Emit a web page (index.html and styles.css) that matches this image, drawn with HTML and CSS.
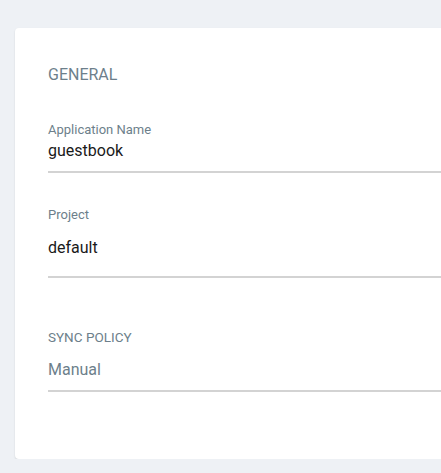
FILE: index.html
```html
<!DOCTYPE html>
<html>
<head>
<meta charset="utf-8">
<link rel="stylesheet" href="styles.css">
</head>
<body>
<div class="page">
  <div class="card">
    <div class="section-title">GENERAL</div>
    <div class="field field-text">
      <div class="field-label">Application Name</div>
      <div class="field-value">guestbook</div>
    </div>
    <div class="field field-select">
      <div class="field-label">Project</div>
      <div class="field-value">default</div>
    </div>
    <div class="field field-policy">
      <div class="policy-label">SYNC POLICY</div>
      <div class="field-value muted">Manual</div>
    </div>
  </div>
</div>
</body>
</html>
```
FILE: styles.css
```css
html, body {
  margin: 0;
  padding: 0;
  background: #eef1f5;
  overflow: hidden;
  font-family: Roboto, "Liberation Sans", sans-serif;
}
.page {
  padding: 28px 0 0 15px;
  width: 700px;
}
.card {
  background: #fff;
  border-radius: 4px;
  box-shadow: 0 1px 2px rgba(0, 0, 0, 0.12);
  padding: 37px 0 67px 33px;
}
.section-title {
  font-size: 16px;
  line-height: 19px;
  color: #6d7f8b;
}
.field {
  border-bottom: 2px solid #d3d3d3;
}
.field-label {
  font-size: 13px;
  line-height: 15px;
  color: #6d7f8b;
}
.field-value {
  font-size: 16px;
  line-height: 20px;
  color: #1a1a1a;
}
.field-value.muted {
  color: #6d7f8b;
}
.field-text {
  margin-top: 38px;
  padding-bottom: 10px;
}
.field-text .field-value {
  margin-top: 4px;
}
.field-select {
  margin-top: 34px;
  padding-bottom: 18px;
}
.field-select .field-value {
  margin-top: 16px;
}
.field-policy {
  margin-top: 51px;
  padding-bottom: 10px;
}
.policy-label {
  font-size: 13.5px;
  line-height: 16px;
  color: #6d7f8b;
}
.field-policy .field-value {
  margin-top: 15px;
}
```
